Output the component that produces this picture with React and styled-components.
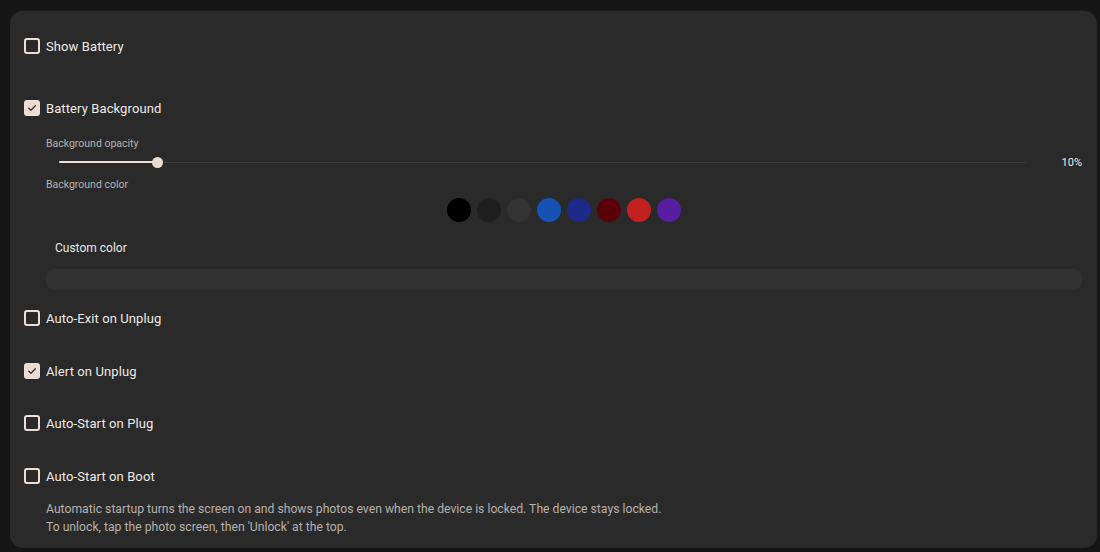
import React from "react";
import styled, { createGlobalStyle } from "styled-components";

const GlobalStyle = createGlobalStyle`
  html, body {
    margin: 0;
    padding: 0;
    background: #151515;
    font-family: Roboto, "Noto Sans", "Liberation Sans", sans-serif;
  }
  * { box-sizing: border-box; }
`;

const Page = styled.div`
  width: 1100px;
  height: 552px;
  padding: 11px 3px 4px 10px;
  overflow: hidden;
`;

const Panel = styled.section`
  height: 537px;
  background: #2a2a2a;
  border-radius: 13px;
  padding: 25px 15px 0 14px;
  display: flex;
  flex-direction: column;
  box-shadow: 0 -1px 0 rgba(255, 255, 255, 0.03);
`;

const CheckRow = styled.label`
  display: flex;
  align-items: center;
  gap: 6px;
  height: 20px;
  margin-top: ${(p) => p.$top || 0}px;
  color: #efe9e5;
  font-size: 13px;
  letter-spacing: 0.1px;
`;

const Box = styled.span`
  width: 16px;
  height: 16px;
  border-radius: 3px;
  border: 2px solid #ecdfd5;
  background: ${(p) => (p.$on ? "#ecdcd0" : "transparent")};
  display: flex;
  align-items: center;
  justify-content: center;
  flex: none;
`;

const Sub = styled.div`
  display: flex;
  flex-direction: column;
  padding-left: 22px;
`;

const SmallLabel = styled.div`
  font-size: 10.5px;
  line-height: 14px;
  color: #b8b1ad;
  margin-top: ${(p) => p.$top || 0}px;
`;

const SliderRow = styled.div`
  display: flex;
  align-items: center;
  height: 12px;
  margin-top: 5px;
`;

const Slider = styled.div`
  flex: 1;
  position: relative;
  height: 12px;
  margin: 0 35px 0 13px;
`;

const Track = styled.div`
  position: absolute;
  left: 0;
  right: 0;
  top: 6px;
  height: 1px;
  background: #3c3a39;
`;

const Fill = styled.div`
  position: absolute;
  left: 0;
  top: 5px;
  height: 2px;
  border-radius: 1px;
  background: #ede0d5;
`;

const Thumb = styled.div`
  position: absolute;
  top: 0.5px;
  width: 11px;
  height: 11px;
  margin-left: -5.5px;
  border-radius: 50%;
  background: #ecdcd0;
`;

const Value = styled.span`
  font-size: 11px;
  color: #f1ebe7;
  width: 21px;
  text-align: right;
  white-space: nowrap;
`;

const Swatches = styled.div`
  display: flex;
  justify-content: center;
  gap: 6px;
  margin-top: 6px;
`;

const Swatch = styled.span`
  width: 24px;
  height: 24px;
  border-radius: 50%;
  background: ${(p) => p.$c};
`;

const CustomLabel = styled.div`
  font-size: 12px;
  line-height: 16px;
  color: #ede6e2;
  padding-left: 9px;
  margin-top: 18px;
`;

const Field = styled.div`
  height: 21px;
  margin-top: 13px;
  border-radius: 8px;
  background: #323232;
`;

const Note = styled.p`
  margin: 14px 0 0 22px;
  font-size: 12.2px;
  line-height: 18px;
  color: #b7b0ac;
`;

const Check = () => (
  <svg width="10" height="10" viewBox="0 0 10 10">
    <path d="M1.8 5.2 L4 7.3 L8.3 2.8" fill="none" stroke="#3a302b" strokeWidth="1.3" strokeLinecap="round" strokeLinejoin="round" />
  </svg>
);

const Option = ({ on, top, children }) => (
  <CheckRow $top={top}>
    <Box $on={on}>{on && <Check />}</Box>
    {children}
  </CheckRow>
);

const colors = ["#000000", "#1e1e1e", "#333333", "#1652b6", "#1d2a8a", "#590008", "#c22120", "#581ea0"];

export default function App() {
  const opacity = 10;
  return (
    <Page>
      <GlobalStyle />
      <Panel>
        <Option>Show Battery</Option>
        <Option on top={42}>Battery Background</Option>
        <Sub>
          <SmallLabel $top={19}>Background opacity</SmallLabel>
          <SliderRow>
            <Slider>
              <Track />
              <Fill style={{ width: `${opacity * 1.02}%` }} />
              <Thumb style={{ left: `${opacity * 1.02}%` }} />
            </Slider>
            <Value>{opacity}%</Value>
          </SliderRow>
          <SmallLabel $top={10}>Background color</SmallLabel>
          <Swatches>
            {colors.map((c) => (
              <Swatch key={c} $c={c} />
            ))}
          </Swatches>
          <CustomLabel>Custom color</CustomLabel>
          <Field />
        </Sub>
        <Option top={18}>Auto-Exit on Unplug</Option>
        <Option on top={33}>Alert on Unplug</Option>
        <Option top={32}>Auto-Start on Plug</Option>
        <Option top={33}>Auto-Start on Boot</Option>
        <Note>
          Automatic startup turns the screen on and shows photos even when the device is locked. The device stays locked.
          <br />
          To unlock, tap the photo screen, then 'Unlock' at the top.
        </Note>
      </Panel>
    </Page>
  );
}
